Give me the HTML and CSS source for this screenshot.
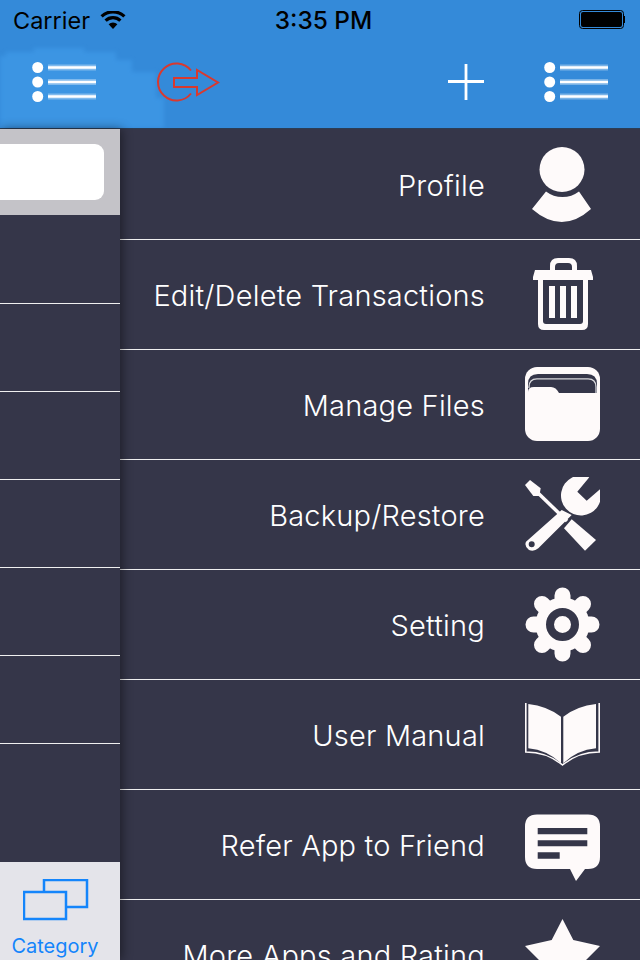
FILE: index.html
```html
<!DOCTYPE html>
<html lang="en">
<head>
<meta charset="utf-8">
<title>Menu</title>
<link rel="stylesheet" href="styles.css">
</head>
<body>
<div class="app">
  <header class="header">
    <svg class="blob" width="170" height="128" viewBox="0 0 170 128"><path class="blob-fill" d="M0 56H6V52H34V48H84V52H116V60H132V72H156V98H164V128H0Z"/></svg>
    <div class="status">
      <div class="status-left">
        <span class="carrier">Carrier</span>
        <svg class="wifi" width="26" height="18" viewBox="0 0 26 18"><path d="M13 18L8.600 13.200A6.600 6.600 0 0 1 17.400 13.200Z"/><path class="wifi-arc" d="M5.600 9.600A10.600 10.600 0 0 1 20.400 9.600M1.600 5.400A16.400 16.400 0 0 1 24.400 5.400"/></svg>
      </div>
      <span class="time">3:35 PM</span>
      <svg class="battery" width="46" height="20" viewBox="0 0 46 20"><rect class="batt-frame" x=".5" y=".5" width="44" height="18" rx="3"/><rect x="2" y="2" width="41" height="15" rx="2"/><rect x="45" y="6" width="1" height="7"/></svg>
    </div>
    <nav class="nav">
      <svg class="list-icon" width="64" height="40" viewBox="0 0 64 40"><use href="#list"/></svg>
      <svg class="logout" width="66" height="44" viewBox="0 0 66 44"><path d="M36 8.500A18.500 18.500 0 1 0 36 31.500"/><path d="M19 16H42V8L63 20.500L42 33V25H19Z"/></svg>
      <div class="spacer"></div>
      <svg class="plus" width="36" height="36" viewBox="0 0 36 36"><path d="M18 0V36M0 17.500H36"/></svg>
      <svg class="list-icon" width="64" height="40" viewBox="0 0 64 40"><use href="#list"/></svg>
    </nav>
  </header>
  <svg class="defs" width="0" height="0"><defs><g id="list"><path class="list-halo" d="M16 5.500H64M16 20H64M16 34.500H64"/><path class="list-core" d="M16 5.500H64M16 20H64M16 34.500H64"/><circle class="list-dot" cx="5.700" cy="5.500" r="5.500"/><circle class="list-dot" cx="5.700" cy="20" r="5.500"/><circle class="list-dot" cx="5.700" cy="34.500" r="5.500"/></g></defs></svg>
  <main class="main">
    <aside class="side">
      <div class="search"><div class="field"></div></div>
      <div class="side-row"></div>
      <div class="side-row"></div>
      <div class="side-row"></div>
      <div class="side-row"></div>
      <div class="side-row"></div>
      <div class="side-row"></div>
      <div class="side-fill"></div>
      <div class="tab">
        <svg class="tab-icon" width="66" height="42" viewBox="0 0 66 42"><path class="tab-back" d="M21 13V1H64V28H44"/><rect class="tab-front" x="1" y="13" width="42" height="27"/></svg>
        <span class="tab-label">Category</span>
      </div>
    </aside>
    <section class="menu">
      <div class="row"><span class="label">Profile</span>
        <svg class="icon" viewBox="0 0 75 75"><circle cx="37" cy="22.500" r="22.500"/><path d="M7 62L21 44.500A27.500 27.500 0 0 0 54 44.500L66 62Q37 88 7 62Z"/></svg></div>
      <div class="row"><span class="label">Edit/Delete Transactions</span>
        <svg class="icon" viewBox="0 0 75 75"><path d="M25 13V9Q25 1 33 1H44Q52 1 52 9V13H47V10Q47 6 43 6H34Q30 6 30 10V13Z"/><path d="M10 13H66L68 20V23H63V67Q63 73 57 73H19Q13 73 13 67V23H8V20Z"/><path class="cut" d="M18 23H58V64Q58 67 55 67H21Q18 67 18 64Z"/><path d="M24 29H30V61H24ZM35 29H41V61H35ZM46 29H52V61H46Z"/></svg></div>
      <div class="row"><span class="label">Manage Files</span>
        <svg class="icon" viewBox="0 0 75 75"><rect width="75" height="74" rx="12"/><path class="cut" d="M3 26V17Q3 7 13 7H62Q72 7 72 17V28H3Z"/><path class="folder-line" d="M4 21V20Q4 11.800 12 11.800H63Q71 11.800 71 20V27"/><path d="M3 25Q3 20 9 20H26Q31 20 34 26H72V36H3Z"/></svg></div>
      <div class="row"><span class="label">Backup/Restore</span>
        <svg class="icon" viewBox="0 0 75 75"><path d="M0 8L5 3L15.700 11.300L14.300 19L8.300 19Z"/><path class="thin" d="M12 15L42 44"/><path d="M46.700 42.300L71 63L60 73.700L39 51.300Z"/><path d="M64.300 .3L52.300 14.700L61.700 23.700L75 12.300A20 20 0 1 1 64.300 .3Z"/><path fill-rule="evenodd" d="M36.700 33L46.700 38L13.300 71.300Q9 75 4 73Q-1 69 1 64.700ZM6.700 64.300A3 3 0 1 0 6.700 70.300A3 3 0 1 0 6.700 64.300Z"/></svg></div>
      <div class="row"><span class="label">Setting</span>
        <svg class="icon" viewBox="0 0 75 75"><path class="gear" d="M37.500 8.500V66.500M8.500 37.500H66.500M17 17L58 58M58 17L17 58"/><circle cx="37.500" cy="37.500" r="27"/><circle class="ring" cx="37.500" cy="37.500" r="12.500"/></svg></div>
      <div class="row"><span class="label">User Manual</span>
        <svg class="icon" viewBox="0 0 75 75"><path class="cover" d="M.8 6V55Q22 55 37.500 68Q53 55 74.200 55V6"/><path d="M3.300 7Q22 9 36 19.700V66.300Q22 53 3.300 51.300Z"/><path d="M71 7Q52 9 38.300 19.700V66.300Q52 53 71 51.300Z"/></svg></div>
      <div class="row"><span class="label">Refer App to Friend</span>
        <svg class="icon" viewBox="0 0 75 75"><path d="M12 7.500H63Q75 7.500 75 19.500V50Q75 62 63 62H60L51 74L45 62H12Q0 62 0 50V19.500Q0 7.500 12 7.500Z"/><path class="cut" d="M12.700 21H62.300V27.300H12.700ZM12.700 33.300H62.300V39.300H12.700ZM12.700 45.300H34.700V51.700H12.700Z"/></svg></div>
      <div class="row"><span class="label">More Apps and Rating</span>
        <svg class="icon" viewBox="0 0 75 75"><path d="M37.500 2L48.300 23L75 29L57 47L61 72L37.500 60L14 72L18 47L0 29L26.700 23Z"/></svg></div>
    </section>
  </main>
</div>
</body>
</html>
```
FILE: styles.css
```css
html, body {
  margin: 0;
  padding: 0;
  height: 960px;
  overflow: hidden;
}
.app {
  width: 640px;
  height: 960px;
  display: flex;
  flex-direction: column;
  overflow: hidden;
  font-family: Inter, "Liberation Sans", sans-serif;
}
.defs { position: absolute; }

/* header */
.header {
  position: relative;
  flex: none;
  height: 129px;
  box-sizing: border-box;
  background: #348ad9;
  border-bottom: 1px solid #2b3d55;
}
.blob { position: absolute; left: 0; top: 0; }
.blob-fill { fill: #44a0ee; opacity: .5; filter: blur(2px); }
.status {
  position: relative;
  height: 40px;
  box-sizing: border-box;
  padding: 0 15px 0 13px;
  display: flex;
  align-items: center;
  justify-content: space-between;
  color: #000;
}
.status-left { display: flex; align-items: center; gap: 10px; width: 200px; }
.carrier { font-size: 23.500px; }
.wifi { margin-top: -1px; }
.wifi-arc { fill: none; stroke: #000; stroke-width: 3.200; }
.time { font-size: 24.400px; font-weight: 500; }
.battery { margin-left: 145px; }
.batt-frame { fill: none; stroke: #000; }
.nav {
  position: relative;
  height: 82px;
  display: flex;
  align-items: center;
  padding: 0 32px;
}
.nav .list-icon { margin-top: 2px; }
.list-halo { stroke: #fff; stroke-opacity: .35; stroke-width: 6; fill: none; }
.list-core { stroke: #fff; stroke-width: 2.500; fill: none; }
.list-dot { fill: #fff; }
.logout {
  margin-left: 59px;
  margin-top: 5px;
  fill: none;
  stroke: #d9392f;
  stroke-width: 2;
}
.spacer { flex: 1; }
.plus {
  margin-right: 60px;
  margin-top: 1px;
  fill: none;
  stroke: #fff;
  stroke-width: 2.800;
}

/* body */
.main { flex: 1; min-height: 0; display: flex; }
.side {
  position: relative;
  z-index: 1;
  flex: none;
  width: 120px;
  display: flex;
  flex-direction: column;
  background: #353649;
  box-shadow: 2px 0 10px rgba(0, 0, 0, .45);
}
.search {
  flex: none;
  height: 87px;
  box-sizing: border-box;
  background: #c4c3c8;
  border-bottom: 1px solid #353649;
  padding: 15px 16px 0 0;
}
.field { height: 56px; background: #fff; border-radius: 0 9px 9px 0; }
.side-row {
  flex: none;
  height: 88px;
  box-sizing: border-box;
  border-bottom: 1px solid #f0f0f0;
}
.side-fill { flex: 1; }
.tab {
  flex: none;
  height: 98px;
  box-sizing: border-box;
  background: #e4e4ea;
  display: flex;
  flex-direction: column;
  align-items: center;
  padding-top: 17px;
}
.tab-icon { margin-left: -9px; }
.tab-back { fill: none; stroke: #1485fb; stroke-width: 2.500; }
.tab-front { fill: none; stroke: #1485fb; stroke-width: 2.500; }
.tab-label {
  margin-top: 11px;
  margin-left: -10px;
  font-size: 20px;
  line-height: 28px;
  color: #1485fb;
  white-space: nowrap;
}

/* menu */
.menu {
  flex: 1;
  min-width: 0;
  padding-top: 1px;
  background: #353649;
  overflow: hidden;
}
.row {
  height: 110px;
  box-sizing: border-box;
  border-bottom: 1px solid #f0f0f0;
  display: flex;
  align-items: center;
  justify-content: flex-end;
  padding-right: 40px;
  gap: 40px;
}
.label {
  margin-top: 2px;
  font-size: 29px;
  font-weight: 300;
  letter-spacing: .2px;
  color: #ffffff;
  white-space: nowrap;
}
.icon { flex: none; width: 75px; height: 75px; fill: #fefafa; }
.icon .cut { fill: #353649; }
.icon .folder-line { fill: none; stroke: #d8d8dc; stroke-width: 1.300; }
.thin { fill: none; stroke: #fefafa; stroke-width: 3.500; }
.gear { fill: none; stroke: #fefafa; stroke-width: 16; stroke-linecap: round; }
.ring { fill: none; stroke: #353649; stroke-width: 8; }
.cover { fill: none; stroke: #fefafa; stroke-width: 1.600; }
```
